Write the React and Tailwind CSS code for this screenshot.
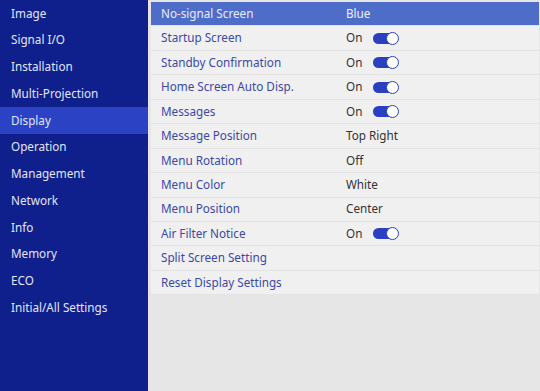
import React from 'react';

const categories = [
  'Image',
  'Signal I/O',
  'Installation',
  'Multi-Projection',
  'Display',
  'Operation',
  'Management',
  'Network',
  'Info',
  'Memory',
  'ECO',
  'Initial/All Settings',
];

const settings = [
  { label: 'No-signal Screen', value: 'Blue' },
  { label: 'Startup Screen', value: 'On', toggle: true },
  { label: 'Standby Confirmation', value: 'On', toggle: true },
  { label: 'Home Screen Auto Disp.', value: 'On', toggle: true },
  { label: 'Messages', value: 'On', toggle: true },
  { label: 'Message Position', value: 'Top Right' },
  { label: 'Menu Rotation', value: 'Off' },
  { label: 'Menu Color', value: 'White' },
  { label: 'Menu Position', value: 'Center' },
  { label: 'Air Filter Notice', value: 'On', toggle: true },
  { label: 'Split Screen Setting' },
  { label: 'Reset Display Settings' },
];

function Toggle() {
  return (
    <span className="relative ml-[11px] inline-block h-[11px] w-[25px] rounded-full bg-[#2b3fc1]">
      <span className="absolute right-[-1px] top-[-1px] h-[13px] w-[13px] rounded-full border border-[#2b3fc1] bg-white" />
    </span>
  );
}

export default function App() {
  const active = 'Display';

  return (
    <div
      className="flex h-[391px] w-[540px] overflow-hidden bg-[#e6e6e6] text-[11.7px]"
      style={{ fontFamily: '"Noto Sans", "Open Sans", sans-serif' }}
    >
      {/* category menu */}
      <nav className="flex w-[148px] shrink-0 flex-col bg-[#0f1f8b]">
        {categories.map(name => (
          <div
            key={name}
            className={`flex h-[26.75px] items-center pl-[11px] text-[#e3e6f6] ${name === active ? 'bg-[#2a42c3]' : ''}`}
          >
            {name}
          </div>
        ))}
      </nav>

      {/* settings list */}
      <div className="flex-1 pl-[3px] pr-[1px] pt-[2px]">
        <div className="bg-[#f0f0f0]">
          {settings.map((s, i) => (
            <div
              key={s.label}
              className={`flex h-[24.45px] items-center border-b border-[#e3e3e3] ${i === 0 ? 'bg-[#4e6dc8] text-[#e8ecf8]' : 'text-[#3a49a6]'}`}
            >
              <span className="w-[195px] shrink-0 pl-[10px]">{s.label}</span>
              {s.value && (
                <span className={`flex items-center ${i === 0 ? 'text-[#eef1fa]' : 'text-[#333333]'}`}>
                  {s.value}
                  {s.toggle && <Toggle />}
                </span>
              )}
            </div>
          ))}
        </div>
      </div>
    </div>
  );
}
